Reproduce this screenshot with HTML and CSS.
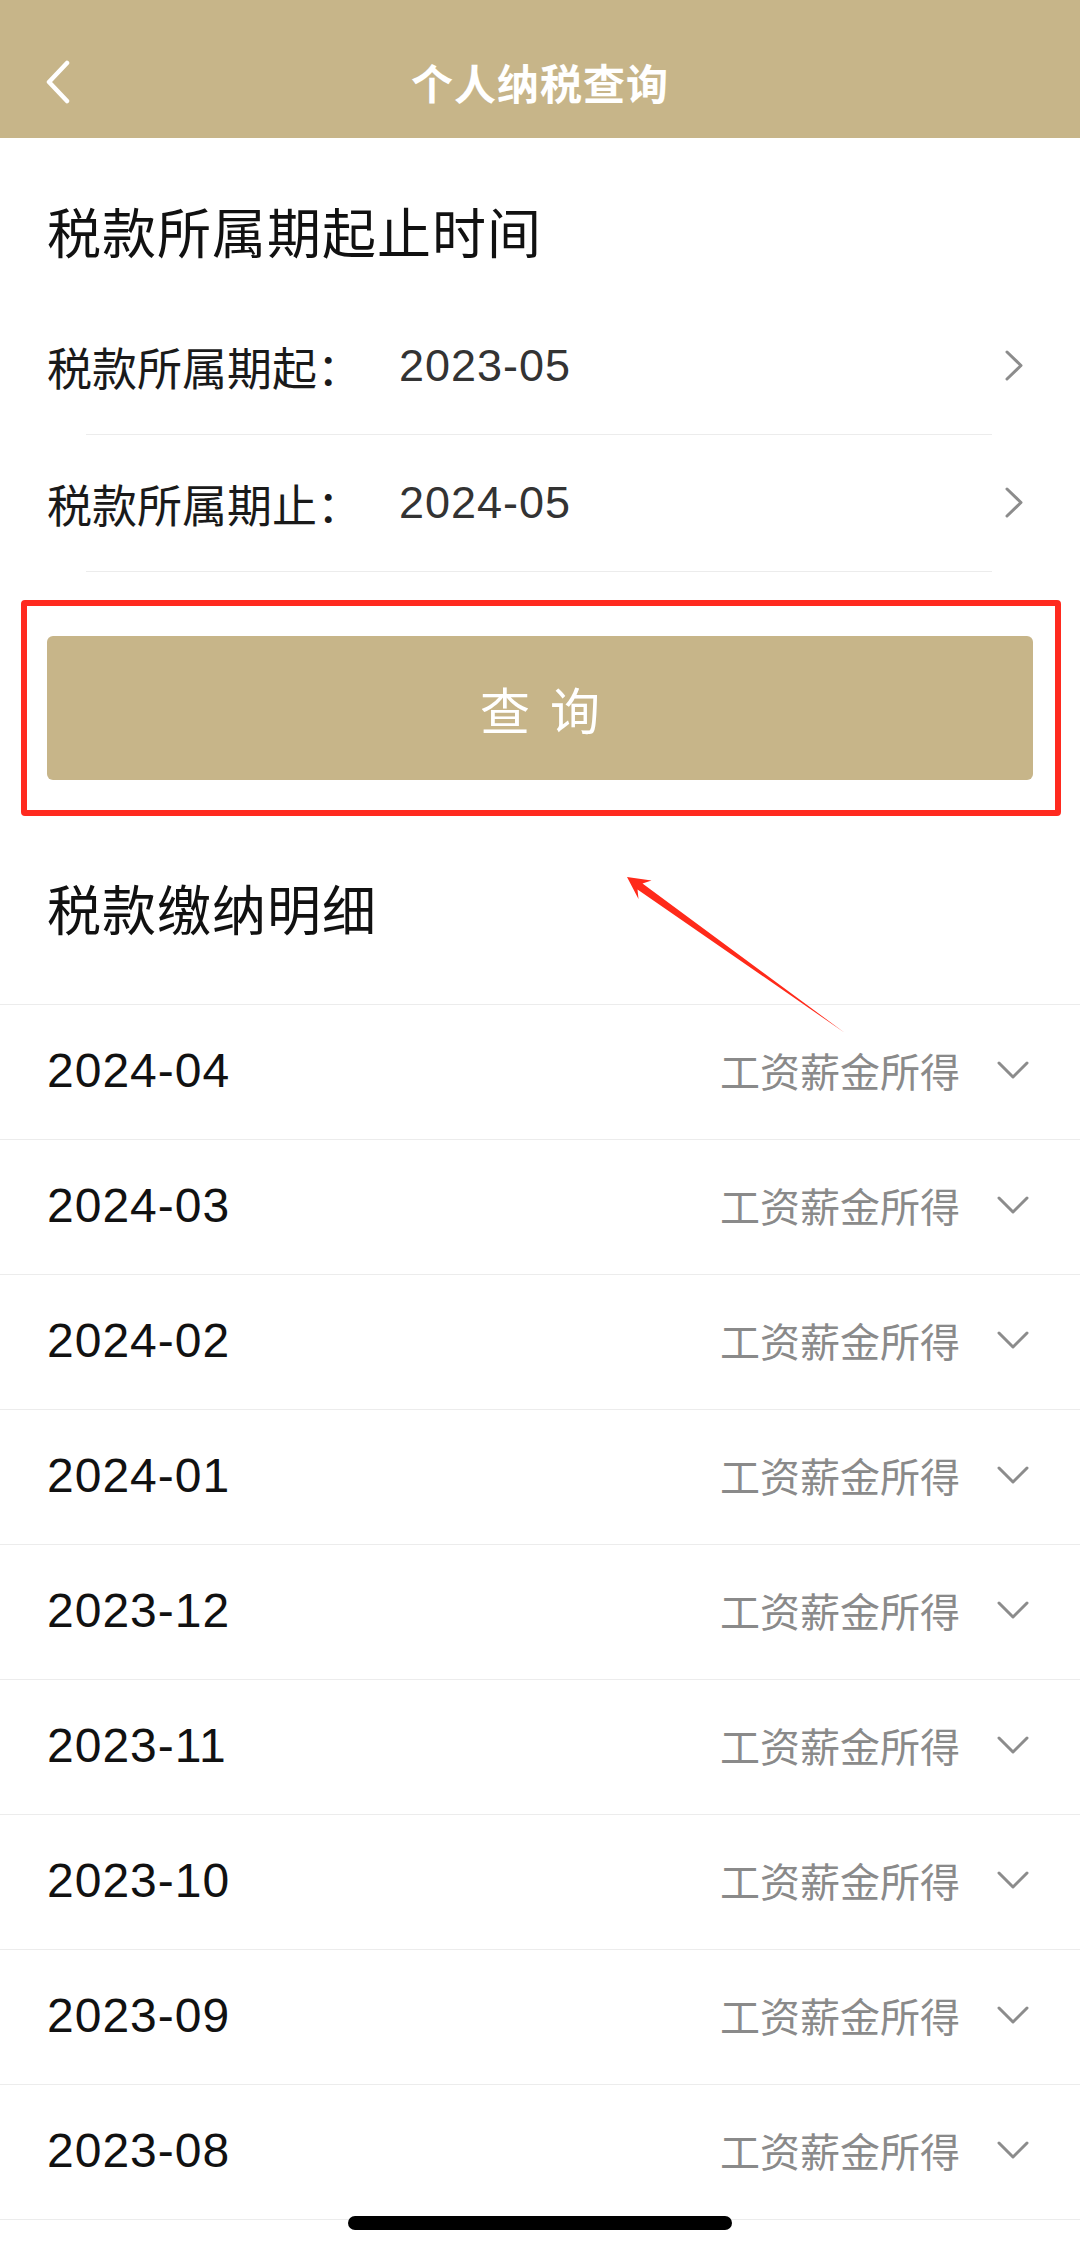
FILE: index.html
```html
<!DOCTYPE html>
<html lang="zh-CN">
<head>
<meta charset="utf-8">
<title>个人纳税查询</title>
<link rel="stylesheet" href="styles.css">
</head>
<body>
<div class="page">
  <header class="nav">
    <div class="nav-left">
      <svg class="back" width="30" height="44" viewBox="0 0 30 44"><path d="M22 3 L4 22 L22 41" fill="none" stroke="#fff" stroke-width="4.5" stroke-linecap="round" stroke-linejoin="round"/></svg>
    </div>
    <div class="nav-title">个人纳税查询</div>
    <div class="nav-right"></div>
  </header>

  <section class="period">
    <h2 class="sec-title">税款所属期起止时间</h2>
    <div class="field">
      <span class="field-label">税款所属期起：</span>
      <span class="field-value">2023-05</span>
      <svg class="chev-right" width="20" height="34" viewBox="0 0 20 34"><path d="M3 3 L17 16.5 L3 30" fill="none" stroke="#8c8c8c" stroke-width="3" stroke-linecap="round" stroke-linejoin="round"/></svg>
    </div>
    <div class="rule"></div>
    <div class="field">
      <span class="field-label">税款所属期止：</span>
      <span class="field-value">2024-05</span>
      <svg class="chev-right" width="20" height="34" viewBox="0 0 20 34"><path d="M3 3 L17 16.5 L3 30" fill="none" stroke="#8c8c8c" stroke-width="3" stroke-linecap="round" stroke-linejoin="round"/></svg>
    </div>
    <div class="rule"></div>
  </section>

  <div class="highlight">
    <button class="query-btn">查询</button>
  </div>

  <h2 class="sec-title detail-title">税款缴纳明细</h2>

  <ul class="list">
    <li class="item"><span class="item-date">2024-04</span><span class="item-type">工资薪金所得</span><svg class="chev-down" width="34" height="20" viewBox="0 0 34 20"><path d="M3 3 L17 17 L31 3" fill="none" stroke="#8c8c8c" stroke-width="3" stroke-linecap="round" stroke-linejoin="round"/></svg></li>
    <li class="item"><span class="item-date">2024-03</span><span class="item-type">工资薪金所得</span><svg class="chev-down" width="34" height="20" viewBox="0 0 34 20"><path d="M3 3 L17 17 L31 3" fill="none" stroke="#8c8c8c" stroke-width="3" stroke-linecap="round" stroke-linejoin="round"/></svg></li>
    <li class="item"><span class="item-date">2024-02</span><span class="item-type">工资薪金所得</span><svg class="chev-down" width="34" height="20" viewBox="0 0 34 20"><path d="M3 3 L17 17 L31 3" fill="none" stroke="#8c8c8c" stroke-width="3" stroke-linecap="round" stroke-linejoin="round"/></svg></li>
    <li class="item"><span class="item-date">2024-01</span><span class="item-type">工资薪金所得</span><svg class="chev-down" width="34" height="20" viewBox="0 0 34 20"><path d="M3 3 L17 17 L31 3" fill="none" stroke="#8c8c8c" stroke-width="3" stroke-linecap="round" stroke-linejoin="round"/></svg></li>
    <li class="item"><span class="item-date">2023-12</span><span class="item-type">工资薪金所得</span><svg class="chev-down" width="34" height="20" viewBox="0 0 34 20"><path d="M3 3 L17 17 L31 3" fill="none" stroke="#8c8c8c" stroke-width="3" stroke-linecap="round" stroke-linejoin="round"/></svg></li>
    <li class="item"><span class="item-date">2023-11</span><span class="item-type">工资薪金所得</span><svg class="chev-down" width="34" height="20" viewBox="0 0 34 20"><path d="M3 3 L17 17 L31 3" fill="none" stroke="#8c8c8c" stroke-width="3" stroke-linecap="round" stroke-linejoin="round"/></svg></li>
    <li class="item"><span class="item-date">2023-10</span><span class="item-type">工资薪金所得</span><svg class="chev-down" width="34" height="20" viewBox="0 0 34 20"><path d="M3 3 L17 17 L31 3" fill="none" stroke="#8c8c8c" stroke-width="3" stroke-linecap="round" stroke-linejoin="round"/></svg></li>
    <li class="item"><span class="item-date">2023-09</span><span class="item-type">工资薪金所得</span><svg class="chev-down" width="34" height="20" viewBox="0 0 34 20"><path d="M3 3 L17 17 L31 3" fill="none" stroke="#8c8c8c" stroke-width="3" stroke-linecap="round" stroke-linejoin="round"/></svg></li>
    <li class="item"><span class="item-date">2023-08</span><span class="item-type">工资薪金所得</span><svg class="chev-down" width="34" height="20" viewBox="0 0 34 20"><path d="M3 3 L17 17 L31 3" fill="none" stroke="#8c8c8c" stroke-width="3" stroke-linecap="round" stroke-linejoin="round"/></svg></li>
  </ul>

  <svg class="arrow" width="260" height="200" viewBox="600 850 260 200">
    <polygon points="627,877 651.5,880.5 642.5,883.5 845,1033 637.5,889.5 638.5,899" fill="#ff2a1a"/>
  </svg>

  <div class="home-indicator"></div>
</div>
</body>
</html>
```

FILE: styles.css
```css
* {
  box-sizing: border-box;
}

html, body {
  margin: 0;
  padding: 0;
  background: #ffffff;
}

body {
  font-family: "Liberation Sans", "Noto Sans CJK SC", sans-serif;
  color: #1a1a1a;
}

.page {
  position: relative;
  width: 1080px;
  min-height: 2244px;
  overflow: hidden;
}

/* Navigation bar */
.nav {
  height: 138px;
  padding-top: 26px;
  background: #c7b589;
  display: grid;
  grid-template-columns: 1fr auto 1fr;
  align-items: center;
}

.nav-left {
  padding-left: 45px;
  display: flex;
  align-items: center;
}

.back {
  display: block;
}

.nav-title {
  font-family: "Noto Sans CJK SC", sans-serif;
  font-size: 42px;
  font-weight: 700;
  color: #ffffff;
  letter-spacing: 1px;
  line-height: 56px;
}

/* Section titles */
.sec-title {
  margin: 0;
  font-family: "Noto Sans CJK SC", sans-serif;
  font-weight: 400;
  font-size: 54px;
  line-height: 60px;
  color: #111111;
  letter-spacing: 1px;
}

.period .sec-title {
  padding: 63px 0 37px 47px;
}

.detail-title {
  padding: 62px 0 66px 47px;
}

/* Period fields */
.field {
  height: 136px;
  display: flex;
  align-items: center;
  padding: 0 56px 0 47px;
}

.field-label {
  width: 352px;
  font-family: "Noto Sans CJK SC", sans-serif;
  font-size: 45px;
  color: #1a1a1a;
}

.field-value {
  flex: 1;
  font-size: 45px;
  color: #333333;
  letter-spacing: 1px;
}

.chev-right {
  display: block;
}

.rule {
  height: 1px;
  background: #ececec;
  margin: 0 88px 0 86px;
}

/* Highlighted query button */
.highlight {
  margin: 28px 19px 0 21px;
  border: 6px solid #ff2a1f;
  border-radius: 4px;
  padding: 30px 22px 30px 20px;
}

.query-btn {
  display: block;
  width: 100%;
  height: 144px;
  border: none;
  border-radius: 6px;
  background: #c7b589;
  color: #ffffff;
  font-family: "Noto Sans CJK SC", sans-serif;
  font-size: 50px;
  letter-spacing: 20px;
  text-indent: 20px;
  padding: 0;
}

/* Detail list */
.list {
  list-style: none;
  margin: 0;
  padding: 0;
}

.item {
  height: 135px;
  border-top: 1px solid #ececec;
  display: flex;
  align-items: center;
  padding: 0 50px 4px 47px;
}

.item:last-child {
  height: 136px;
  border-bottom: 1px solid #ececec;
}

.item-date {
  flex: 1;
  font-size: 48px;
  color: #111111;
  letter-spacing: 1px;
}

.item-type {
  font-family: "Noto Sans CJK SC", sans-serif;
  font-size: 40px;
  color: #8a8a8a;
  margin-right: 36px;
}

.chev-down {
  display: block;
}

/* Annotation arrow overlay */
.arrow {
  position: absolute;
  left: 600px;
  top: 850px;
  pointer-events: none;
}

/* iOS home indicator */
.home-indicator {
  position: absolute;
  left: 348px;
  top: 2216px;
  width: 384px;
  height: 14px;
  border-radius: 7px;
  background: #000000;
}
```
